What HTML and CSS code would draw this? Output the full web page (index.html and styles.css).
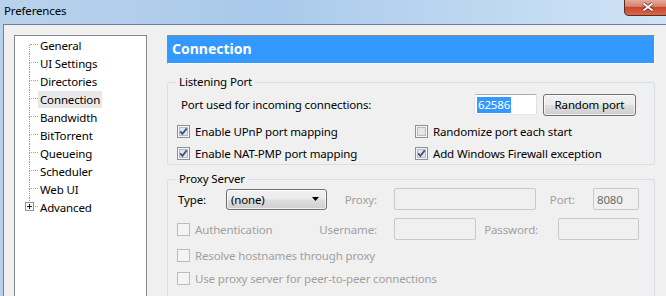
FILE: index.html
```html
<!DOCTYPE html>
<html>
<head>
<meta charset="utf-8">
<title>Preferences</title>
<link rel="stylesheet" href="styles.css">
</head>
<body>
<div class="titlebar">
  <span class="title">Preferences</span>
  <div class="close">
    <svg width="46" height="16" viewBox="0 0 46 16">
      <defs>
        <linearGradient id="cg" x1="0" y1="0" x2="0" y2="1">
          <stop offset="0" stop-color="#eab0a2"/>
          <stop offset="0.45" stop-color="#d6806c"/>
          <stop offset="0.5" stop-color="#c6462c"/>
          <stop offset="1" stop-color="#d9694e"/>
        </linearGradient>
      </defs>
      <path d="M0.5 -1 V11 Q0.5 15.5 5 15.5 H47 V-1" fill="url(#cg)" stroke="#5b2b21"/>
      <path d="M19.5 3.5 L28.5 10.5 M28.5 3.5 L19.5 10.5" stroke="#4a2119" stroke-width="3.4"/>
      <path d="M19.5 3.5 L28.5 10.5 M28.5 3.5 L19.5 10.5" stroke="#ffffff" stroke-width="2"/>
    </svg>
  </div>
</div>
<div class="client">
  <div class="tree">
    <div class="node first"><span class="conn"><span class="up"></span><span class="down"></span></span><span class="label">General</span></div>
    <div class="node"><span class="conn"><span class="up"></span><span class="down"></span></span><span class="label">UI Settings</span></div>
    <div class="node"><span class="conn"><span class="up"></span><span class="down"></span></span><span class="label">Directories</span></div>
    <div class="node"><span class="conn"><span class="up"></span><span class="down"></span></span><span class="label current">Connection</span></div>
    <div class="node"><span class="conn"><span class="up"></span><span class="down"></span></span><span class="label">Bandwidth</span></div>
    <div class="node"><span class="conn"><span class="up"></span><span class="down"></span></span><span class="label">BitTorrent</span></div>
    <div class="node"><span class="conn"><span class="up"></span><span class="down"></span></span><span class="label">Queueing</span></div>
    <div class="node"><span class="conn"><span class="up"></span><span class="down"></span></span><span class="label">Scheduler</span></div>
    <div class="node"><span class="conn"><span class="up"></span><span class="down"></span></span><span class="label">Web UI</span></div>
    <div class="node last"><span class="conn"><span class="up"></span><span class="down"></span><span class="plus"><svg width="9" height="9" viewBox="0 0 9 9"><rect x="0.5" y="0.5" width="8" height="8" fill="#f7f7f7" stroke="#919191"/><path d="M2 4.5 H7 M4.5 2 V7" stroke="#202020"/></svg></span></span><span class="label">Advanced</span></div>
  </div>
  <div class="main">
    <div class="header">Connection</div>
    <fieldset class="group listen">
      <legend>Listening Port</legend>
      <div class="group-body">
        <div class="port-row">
          <span class="port-label">Port used for incoming connections:</span>
          <span class="textbox port-box"><span class="sel">62586</span></span>
          <span class="btn">Random port</span>
        </div>
        <div class="checks">
          <div class="check"><svg class="cb" width="13" height="13" viewBox="0 0 13 13"><rect x="0.5" y="0.5" width="12" height="12" fill="#f6f6f6" stroke="#8e8f8f"/><rect x="2.5" y="2.5" width="8" height="8" fill="#e3e5e8" stroke="#b8bcc2"/><path d="M3.2 6.3 L5.4 8.8 L9.8 3.4" stroke="#3b5487" stroke-width="1.8" fill="none"/></svg><span>Enable UPnP port mapping</span></div>
          <div class="check"><svg class="cb" width="13" height="13" viewBox="0 0 13 13"><rect x="0.5" y="0.5" width="12" height="12" fill="#f6f6f6" stroke="#8e8f8f"/><rect x="2.5" y="2.5" width="8" height="8" fill="#e3e5e8" stroke="#b8bcc2"/></svg><span>Randomize port each start</span></div>
          <div class="check"><svg class="cb" width="13" height="13" viewBox="0 0 13 13"><rect x="0.5" y="0.5" width="12" height="12" fill="#f6f6f6" stroke="#8e8f8f"/><rect x="2.5" y="2.5" width="8" height="8" fill="#e3e5e8" stroke="#b8bcc2"/><path d="M3.2 6.3 L5.4 8.8 L9.8 3.4" stroke="#3b5487" stroke-width="1.8" fill="none"/></svg><span>Enable NAT-PMP port mapping</span></div>
          <div class="check"><svg class="cb" width="13" height="13" viewBox="0 0 13 13"><rect x="0.5" y="0.5" width="12" height="12" fill="#f6f6f6" stroke="#8e8f8f"/><rect x="2.5" y="2.5" width="8" height="8" fill="#e3e5e8" stroke="#b8bcc2"/><path d="M3.2 6.3 L5.4 8.8 L9.8 3.4" stroke="#3b5487" stroke-width="1.8" fill="none"/></svg><span>Add Windows Firewall exception</span></div>
        </div>
      </div>
    </fieldset>
    <fieldset class="group proxy">
      <legend>Proxy Server</legend>
      <div class="group-body">
        <div class="prow r1">
          <span class="type-label">Type:</span>
          <span class="combo"><span>(none)</span><svg width="7" height="4" viewBox="0 0 7 4"><path d="M0 0 H7 L3.5 4 Z" fill="#000"/></svg></span>
          <span class="dlabel w50">Proxy:</span>
          <span class="textbox dis w142"></span>
          <span class="dlabel w39">Port:</span>
          <span class="textbox dis w46 val">8080</span>
        </div>
        <div class="prow r2">
          <span class="check dcheck w140"><svg class="cb" width="13" height="13" viewBox="0 0 13 13"><rect x="0.5" y="0.5" width="12" height="12" fill="#f4f4f4" stroke="#bcbcbc"/></svg><span>Authentication</span></span>
          <span class="dlabel w60">Username:</span>
          <span class="textbox dis w82"></span>
          <span class="dlabel w62">Password:</span>
          <span class="textbox dis w81 gap20"></span>
        </div>
        <div class="prow r3">
          <span class="check dcheck"><svg class="cb" width="13" height="13" viewBox="0 0 13 13"><rect x="0.5" y="0.5" width="12" height="12" fill="#f4f4f4" stroke="#bcbcbc"/></svg><span>Resolve hostnames through proxy</span></span>
        </div>
        <div class="prow r4">
          <span class="check dcheck"><svg class="cb" width="13" height="13" viewBox="0 0 13 13"><rect x="0.5" y="0.5" width="12" height="12" fill="#f4f4f4" stroke="#bcbcbc"/></svg><span>Use proxy server for peer-to-peer connections</span></span>
        </div>
      </div>
    </fieldset>
  </div>
</div>
</body>
</html>
```

FILE: styles.css
```css
* { box-sizing: border-box; }
html, body { margin: 0; padding: 0; }
body {
  width: 666px;
  height: 296px;
  overflow: hidden;
  background: linear-gradient(to right, #b9d2ec 0%, #a9c9ea 40%, #c3dbf3 80%, #cfe3f6 100%);
  font-family: "Noto Sans", "Open Sans", sans-serif;
  font-size: 11.5px;
  letter-spacing: -0.15px;
  color: #000;
  display: flex;
  flex-direction: column;
}

.titlebar {
  height: 24px;
  flex: none;
  display: flex;
  align-items: flex-start;
}
.title {
  padding-left: 4px;
  line-height: 22px;
}
.close {
  margin-left: auto;
  margin-right: -4px;
  height: 16px;
  line-height: 0;
}

.client {
  flex: 1;
  min-height: 0;
  margin-left: 3px;
  border-left: 1px solid #6f8196;
  border-top: 1px solid #6f8196;
  background: #f0f0f0;
  display: flex;
  gap: 20px;
  padding: 10px 0 0 10px;
}

.tree {
  width: 133px;
  flex: none;
  background: #fff;
  border: 1px solid #828790;
  border-bottom: none;
  padding-left: 14px;
}
.node {
  display: flex;
  align-items: center;
  height: 18px;
}
.conn {
  position: relative;
  width: 9px;
  height: 18px;
  display: flex;
  flex-direction: column;
  flex: none;
}
.conn .up {
  height: 9px;
  border-left: 1px dotted #a0a0a0;
  border-bottom: 1px dotted #a0a0a0;
}
.conn .down {
  height: 9px;
  border-left: 1px dotted #a0a0a0;
}
.node.first .up { border-left: none; margin-left: 1px; }
.node.last .down { border-left: none; }
.plus {
  position: absolute;
  left: -4px;
  top: 4px;
  line-height: 0;
}
.label {
  padding: 0 2px;
  line-height: 17px;
  white-space: nowrap;
}
.label.current { background: #e8e8e8; }

.main {
  width: 488px;
  flex: none;
  display: flex;
  flex-direction: column;
}
.header {
  height: 29px;
  flex: none;
  background: #3399ff;
  border-top: 1px solid #8a8a8a;
  border-left: 1px solid #8a8a8a;
  border-right: 1px solid #ffffff;
  border-bottom: 1px solid #ffffff;
  color: #fff;
  font-weight: bold;
  font-size: 14px;
  letter-spacing: 0;
  line-height: 26px;
  padding-left: 4px;
}

.group {
  margin: 0;
  padding: 0;
  border: 1px solid #d5dfe5;
  border-radius: 3px;
  min-width: 0;
}
.group legend {
  margin-left: 8px;
  padding: 0 3px;
  line-height: 16px;
}
.listen { margin-top: 10px; }
.proxy { margin-top: 6px; flex: 1; border-bottom: none; border-radius: 3px 3px 0 0; }
.group-body { padding-left: 9px; }

.port-row {
  display: flex;
  align-items: center;
  height: 21px;
  margin-top: 4px;
  padding-right: 18px;
}
.port-label { flex: 1; padding-left: 4px; white-space: nowrap; }
.textbox {
  height: 21px;
  border: 1px solid #abadb3;
  border-color: #abadb3 #dbdfe6 #e3e9ef #e2e3ea;
  border-radius: 2px;
  background: #fff;
  display: flex;
  align-items: center;
  padding-left: 2px;
  flex: none;
}
.port-box { width: 63px; margin-right: 6px; }
.sel { background: #3399ff; color: #fff; line-height: 16px; padding: 0 1px; }
.btn {
  width: 93px;
  height: 22px;
  flex: none;
  border: 1px solid #707070;
  border-radius: 3px;
  background: linear-gradient(#f2f2f2 0%, #ebebeb 48%, #dddddd 52%, #cfcfcf 100%);
  box-shadow: inset 0 0 0 1px rgba(255,255,255,0.7);
  display: flex;
  align-items: center;
  justify-content: center;
}

.checks {
  display: grid;
  grid-template-columns: 238px 1fr;
  grid-auto-rows: 22px;
  margin-top: 5px;
}
.check {
  display: flex;
  align-items: center;
  gap: 5px;
  white-space: nowrap;
}
.cb { flex: none; }

.prow {
  display: flex;
  align-items: center;
  height: 22px;
}
.r1 { margin-top: 1px; }
.r2 { margin-top: 8px; }
.r3 { margin-top: 4px; height: 23px; }
.r4 { height: 23px; }
.type-label { width: 49px; padding-left: 1px; flex: none; }
.combo {
  width: 101px;
  height: 21px;
  flex: none;
  border: 1px solid #707070;
  border-radius: 3px;
  background: linear-gradient(#f2f2f2 0%, #ebebeb 48%, #dddddd 52%, #cfcfcf 100%);
  box-shadow: inset 0 0 0 1px rgba(255,255,255,0.7);
  display: flex;
  align-items: center;
  justify-content: space-between;
  padding: 0 7px 0 4px;
}
.dlabel {
  color: #a0a0a0;
  text-align: right;
  flex: none;
  white-space: nowrap;
}
.textbox.dis {
  height: 22px;
  background: #f0f0f0;
  border: 1px solid #c9c9c9;
}
.w50 { width: 50px; }
.w39 { width: 39px; }
.w60 { width: 60px; }
.w62 { width: 62px; }
.w140 { width: 140px; flex: none; }
.w142 { width: 142px; margin-left: 17px; }
.w46 { width: 46px; margin-left: 18px; }
.w82 { width: 82px; margin-left: 17px; }
.w81 { width: 81px; }
.gap20 { margin-left: 20px; }
.val { color: #6d6d6d; padding-left: 3px; }
.dcheck { color: #a0a0a0; }
```
